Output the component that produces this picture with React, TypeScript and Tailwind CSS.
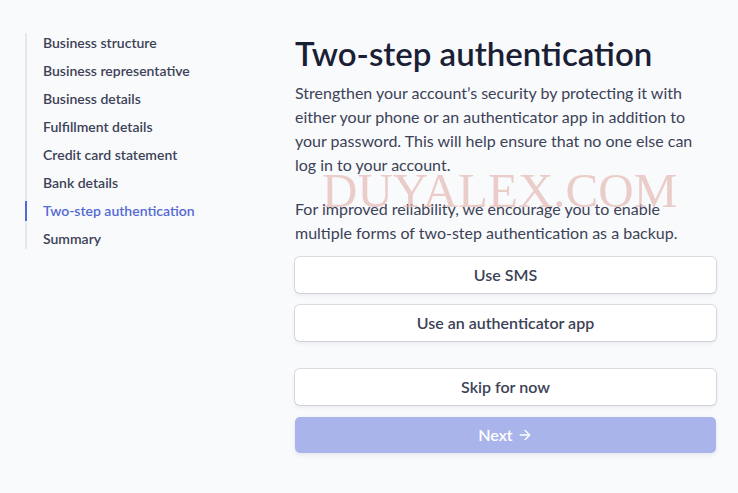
import { ArrowRight } from "lucide-react";

const steps = [
  "Business structure",
  "Business representative",
  "Business details",
  "Fulfillment details",
  "Credit card statement",
  "Bank details",
  "Two-step authentication",
  "Summary",
];

const active = "Two-step authentication";

function OptionButton({ label }: { label: string }) {
  return (
    <button className="h-9 w-full rounded-[5px] bg-white text-[16px] font-semibold text-[#3c4257] shadow-[0_0_0_1px_rgba(60,66,87,0.16),0_2px_4px_rgba(60,66,87,0.1)]">
      {label}
    </button>
  );
}

export default function App() {
  return (
    <div
      className="relative min-h-[493px] w-full bg-[#f9fafc] pl-[25px] pt-[33px]"
      style={{ fontFamily: '"Segoe UI", Lato, "Noto Sans", sans-serif' }}
    >
      <div className="flex">
        {/* Step list */}
        <nav className="w-[270px] shrink-0">
          <ul className="flex flex-col gap-2 border-l-2 border-[#e3e8ee]">
            {steps.map((s) => (
              <li
                key={s}
                className={`-ml-[2px] flex h-5 items-center border-l-2 pl-4 pb-[1px] text-[14px] font-semibold ${
                  s === active ? "border-[#5469d4] text-[#5469d4]" : "border-transparent text-[#3c4257]"
                }`}
              >
                {s}
              </li>
            ))}
          </ul>
        </nav>

        {/* Main */}
        <main className="w-[421px] shrink-0">
          <h1 className="-mt-[2px] text-[33px] font-semibold leading-[44px] text-[#1a1f36]">Two-step authentication</h1>
          <p className="mt-[6px] text-[16px] leading-6 text-[#3c4257]">
            Strengthen your account’s security by protecting it with either your phone or an authenticator app in
            addition to your password. This will help ensure that no one else can log in to your account.
          </p>
          <p className="mt-5 text-[16px] leading-6 text-[#3c4257]">
            For improved reliability, we encourage you to enable multiple forms of two-step authentication as a backup.
          </p>

          <div className="mt-[12px] flex flex-col gap-3">
            <OptionButton label="Use SMS" />
            <OptionButton label="Use an authenticator app" />
          </div>

          <div className="mt-7 flex flex-col gap-3">
            <OptionButton label="Skip for now" />
            <button className="flex h-9 w-full items-center justify-center gap-1 rounded-[5px] bg-[#a9b4ea] text-[16px] font-semibold text-white shadow-[0_2px_4px_rgba(60,66,87,0.1)]">
              Next
              <ArrowRight size={16} strokeWidth={2} />
            </button>
          </div>
        </main>
      </div>

      {/* Watermark */}
      <div
        className="pointer-events-none absolute left-[322px] top-[161px] text-[49px] leading-[60px] text-[#e4b9b4]/70"
        style={{ fontFamily: '"Liberation Serif", serif' }}
      >
        DUYALEX.COM
      </div>
    </div>
  );
}
